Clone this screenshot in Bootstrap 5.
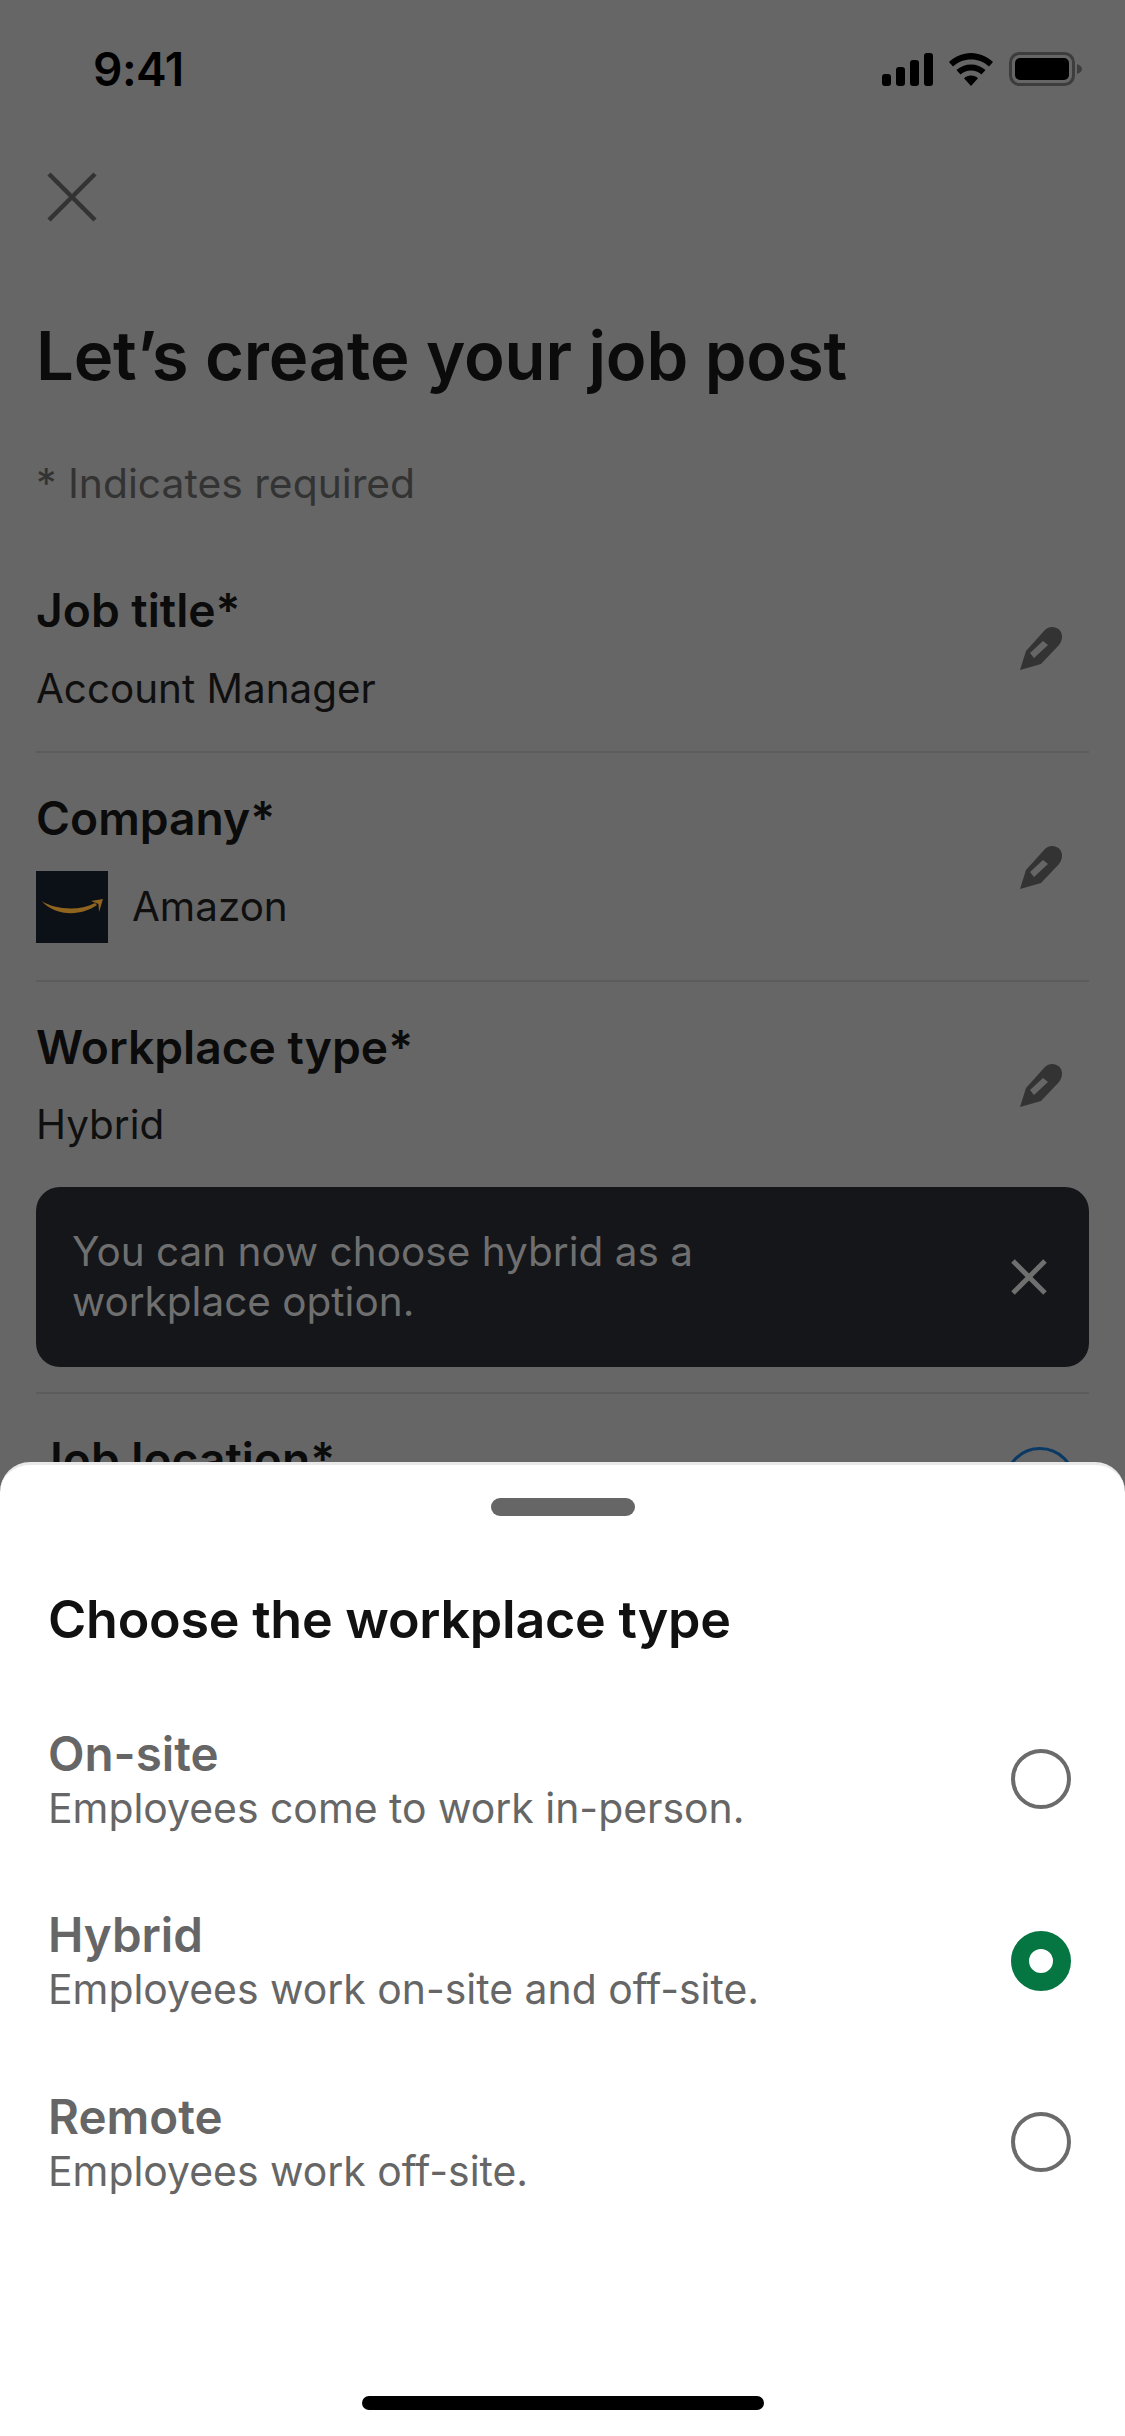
<!DOCTYPE html>
<html lang="en">
<head>
<meta charset="utf-8">
<title>Create job post</title>
<link rel="stylesheet" href="https://cdn.jsdelivr.net/npm/bootstrap@5.3.0/dist/css/bootstrap.min.css">
<style>
html,body{width:1125px;height:2436px;overflow:hidden}
body{background:#666;font-family:Inter,"Liberation Sans",sans-serif;color:#0f0f0f;position:relative}
.statusrow{height:136px;padding:37px 43px 0 93px}
.clock{font-size:46px;line-height:64px;font-weight:600;color:#000;letter-spacing:-.5px}
.sysicons{gap:15px;padding-top:15px}
.closewrap{padding:36px 0 0 47px;height:100px}
.mainpad{padding:0 36px}
.pagetitle{font-size:67px;line-height:80px;font-weight:600;letter-spacing:-.2px;margin:0;padding-top:80px;color:#0b0b0b}
.reqline{font-size:40.8px;line-height:52px;color:#333;margin:61px 0 0}
.firstfield{margin-top:73px}
.fieldrow{padding:37px 0}
.firstfield.fieldrow{padding-top:0}
.fname{font-size:46.2px;line-height:56px;font-weight:600;color:#0b0b0b}
.fval{font-size:40.4px;line-height:50px;color:#0f0f0f}
.fval-gap{margin-top:25px}
.fval-gap.firstval{margin-top:26px}
.hybridrow{padding-bottom:0}
.rule{height:2px;background:#5c5c5c}
.pen{width:48px;height:48px;flex:none;margin-right:25px}
.logobox{width:72px;height:72px;background:#0c1118;flex:none}
.noticebox{background:#14161a;border-radius:24px;height:180px;padding:0 42px 0 36px;margin:37px 0 25px;color:#6f6f6f;font-size:40.500px;line-height:50px}
.locname{margin-top:37px}
.sheetpanel{position:absolute;left:0;right:0;top:1462px;bottom:0;background:#fff;border-top:3px solid #e9e9e9;border-radius:30px 30px 0 0;padding:0 48px}
.grab{width:144px;height:18px;border-radius:9px;background:#666;margin:33px auto 0}
.sheethead{font-size:52px;line-height:64px;font-weight:600;color:#111;margin:72px 0 37px;letter-spacing:-.25px}
.opt{height:181.500px}
.optname{font-size:47.500px;line-height:56px;font-weight:600;color:#666}
.optdesc{font-size:40.900px;line-height:52px;color:#666}
.radioring{width:60px;height:60px;border-radius:50%;border:4px solid #6b6b6b;flex:none;margin-right:6px;margin-top:-1px}
.radioring.picked{border:18px solid #057642;background:#fff}
.homebar{position:absolute;left:362px;bottom:26px;width:402px;height:14px;border-radius:7px;background:#000}
.locring{position:absolute;left:1004px;top:1447px;width:72px;height:72px;border:3px solid #0a3a63;border-radius:50%}
</style>
</head>
<body>
<svg width="0" height="0" class="position-absolute"><defs><path id="penshape" fill-rule="evenodd" d="M30 60 36 41 54 21C58 16 65 16 69 19.500 73 23 73 30 69 35L51 54ZM40 43 44 48 58 35 53 31Z"/></defs></svg>
<div class="statusrow d-flex justify-content-between">
  <div class="clock">9:41</div>
  <div class="sysicons d-flex align-items-start">
    <svg width="52" height="34" viewBox="0 0 52 34"><rect x="1" y="22" width="9" height="12" rx="3"/><rect x="15" y="15" width="9" height="19" rx="3"/><rect x="29" y="8" width="9" height="26" rx="3"/><rect x="43" y="1" width="9" height="33" rx="3"/></svg>
    <svg width="46" height="34" viewBox="0 0 46 34"><path d="M23 1C14.500 1 7 4.500 1 10l4 4.500C10 10 16 7.500 23 7.500S36 10 41 14.500l4-4.500C39 4.500 31.500 1 23 1Z"/><path d="M23 12.500c-5.500 0-10.500 2-14.500 5.500l4 4.500c3-2.500 6.500-4 10.500-4s7.500 1.500 10.500 4l4-4.500c-4-3.500-9-5.500-14.500-5.500Z"/><path d="M23 23.500c-2.800 0-5.200 1-7 2.700L23 34l7-7.800c-1.800-1.700-4.200-2.700-7-2.700Z"/></svg>
    <svg width="73" height="34" viewBox="0 0 73 34"><rect x="1.500" y="1.500" width="63" height="31" rx="9" fill="none" stroke="#3d3d3d" stroke-width="3"/><rect x="6" y="6" width="54" height="22" rx="5"/><path d="M68 12c3 1 5 3 5 5s-2 4-5 5Z" fill="#3d3d3d"/></svg>
  </div>
</div>
<div class="closewrap"><svg width="50" height="50" viewBox="0 0 50 50" class="d-block"><path d="M2 2 48 48M48 2 2 48" stroke="#333" stroke-width="4.500" fill="none"/></svg></div>
<div class="mainpad">
  <h1 class="pagetitle">Let’s create your job post</h1>
  <p class="reqline">* Indicates required</p>
  <div class="fieldrow firstfield d-flex justify-content-between align-items-center">
    <div><div class="fname">Job title*</div><div class="fval fval-gap firstval">Account Manager</div></div>
    <svg class="pen" viewBox="26 14 48 48" fill="#333"><use href="#penshape"/></svg>
  </div>
  <div class="rule"></div>
  <div class="fieldrow d-flex justify-content-between align-items-center">
    <div><div class="fname">Company*</div>
      <div class="d-flex align-items-center fval-gap"><div class="logobox"><svg width="72" height="72" viewBox="0 0 72 72" class="d-block"><path d="M5.500 30C18 38 42 41 59 32L61 34C46 45 20 46 5.500 30ZM55 30 67 28 63 41 62.500 33Z" fill="#8f641f"/></svg></div><div class="fval ms-4">Amazon</div></div>
    </div>
    <svg class="pen" viewBox="26 14 48 48" fill="#333"><use href="#penshape"/></svg>
  </div>
  <div class="rule"></div>
  <div class="fieldrow hybridrow d-flex justify-content-between align-items-center">
    <div><div class="fname">Workplace type*</div><div class="fval fval-gap">Hybrid</div></div>
    <svg class="pen" viewBox="26 14 48 48" fill="#333"><use href="#penshape"/></svg>
  </div>
  <div class="noticebox d-flex justify-content-between align-items-center">
    <div>You can now choose hybrid as a<br>workplace option.</div>
    <svg width="36" height="36" viewBox="0 0 36 36" class="flex-shrink-0"><path d="M2 2 34 34M34 2 2 34" stroke="#6f6f6f" stroke-width="5" fill="none"/></svg>
  </div>
  <div class="rule"></div>
  <div class="fname locname">Job location*</div>
</div>
<div class="locring"></div>
<div class="sheetpanel">
  <div class="grab"></div>
  <h2 class="sheethead">Choose the workplace type</h2>
  <div>
    <div class="opt d-flex justify-content-between align-items-center"><div><div class="optname">On-site</div><div class="optdesc">Employees come to work in-person.</div></div><div class="radioring"></div></div>
    <div class="opt d-flex justify-content-between align-items-center"><div><div class="optname">Hybrid</div><div class="optdesc">Employees work on-site and off-site.</div></div><div class="radioring picked"></div></div>
    <div class="opt d-flex justify-content-between align-items-center"><div><div class="optname">Remote</div><div class="optdesc">Employees work off-site.</div></div><div class="radioring"></div></div>
  </div>
  <div class="homebar"></div>
</div>
</body>
</html>
